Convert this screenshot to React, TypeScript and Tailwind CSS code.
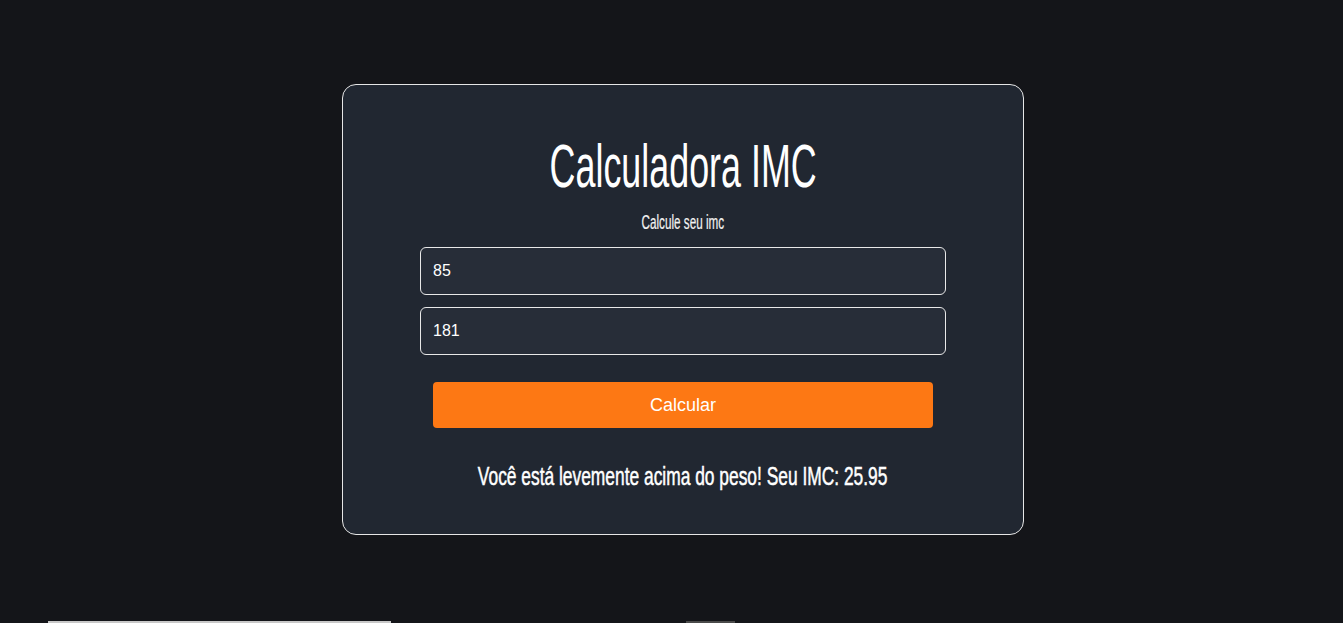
import React, { useState } from 'react';

// no condensed face installed, so narrow Liberation Sans with scale-x
const narrow = "inline-block font-['Liberation_Sans',Arial,sans-serif] whitespace-nowrap origin-center";

export default function App() {
  const [peso, setPeso] = useState('85');
  const [altura, setAltura] = useState('181');
  const [msg, setMsg] = useState('Você está levemente acima do peso! Seu IMC: 25.95');

  const calcular = () => {
    const p = parseFloat(peso);
    const a = parseFloat(altura) / 100;
    if (!p || !a) return;
    const imc = p / (a * a);
    setMsg(`Você está levemente acima do peso! Seu IMC: ${imc.toFixed(2)}`);
  };

  return (
    <div className="min-h-[623px] bg-[#141519] flex flex-col items-center font-['Liberation_Sans',Arial,sans-serif]">
      <div className="mt-[84px] ml-[23px] w-[682px] h-[451px] rounded-[14px] border border-[#e6e6e6] bg-[#212731] flex flex-col items-center">
        <h1 className={`${narrow} mt-[49px] mb-[2px] h-[64px] text-[61px] leading-[64px] text-white scale-x-[0.588]`}>Calculadora IMC</h1>
        <p className={`${narrow} mt-[12px] h-[20px] text-[19.5px] leading-[20px] text-[#f2f2f2] scale-x-[0.6] [-webkit-text-stroke:0.2px_#f2f2f2]`}>Calcule seu imc</p>
        <input
          value={peso}
          onChange={e => setPeso(e.target.value)}
          className="mt-[15px] w-[526px] h-[48px] rounded-[6px] border border-[#e8e8e8] bg-[#272d38] px-[12px] font-['Liberation_Sans',Arial,sans-serif] text-[16px] text-white outline-none"
        />
        <input
          value={altura}
          onChange={e => setAltura(e.target.value)}
          className="mt-[12px] w-[526px] h-[48px] rounded-[6px] border border-[#e8e8e8] bg-[#272d38] px-[12px] font-['Liberation_Sans',Arial,sans-serif] text-[16px] text-white outline-none"
        />
        <button
          onClick={calcular}
          className="mt-[27px] w-[500px] h-[46px] rounded-[4px] bg-[#fd7814] font-['Liberation_Sans',Arial,sans-serif] text-[18px] text-white"
        >
          Calcular
        </button>
        <p className={`${narrow} mt-[33px] h-[30px] text-[25px] leading-[30px] text-white scale-x-[0.695] [-webkit-text-stroke:0.5px_white]`}>{msg}</p>
      </div>
      <div className="mt-auto w-full flex items-end h-[2px]">
        <div className="ml-[48px] w-[343px] h-[2px] bg-[#c8c8c8]" />
        <div className="ml-[295px] w-[49px] h-[2px] bg-[#4a4a4a]" />
      </div>
    </div>
  );
}
